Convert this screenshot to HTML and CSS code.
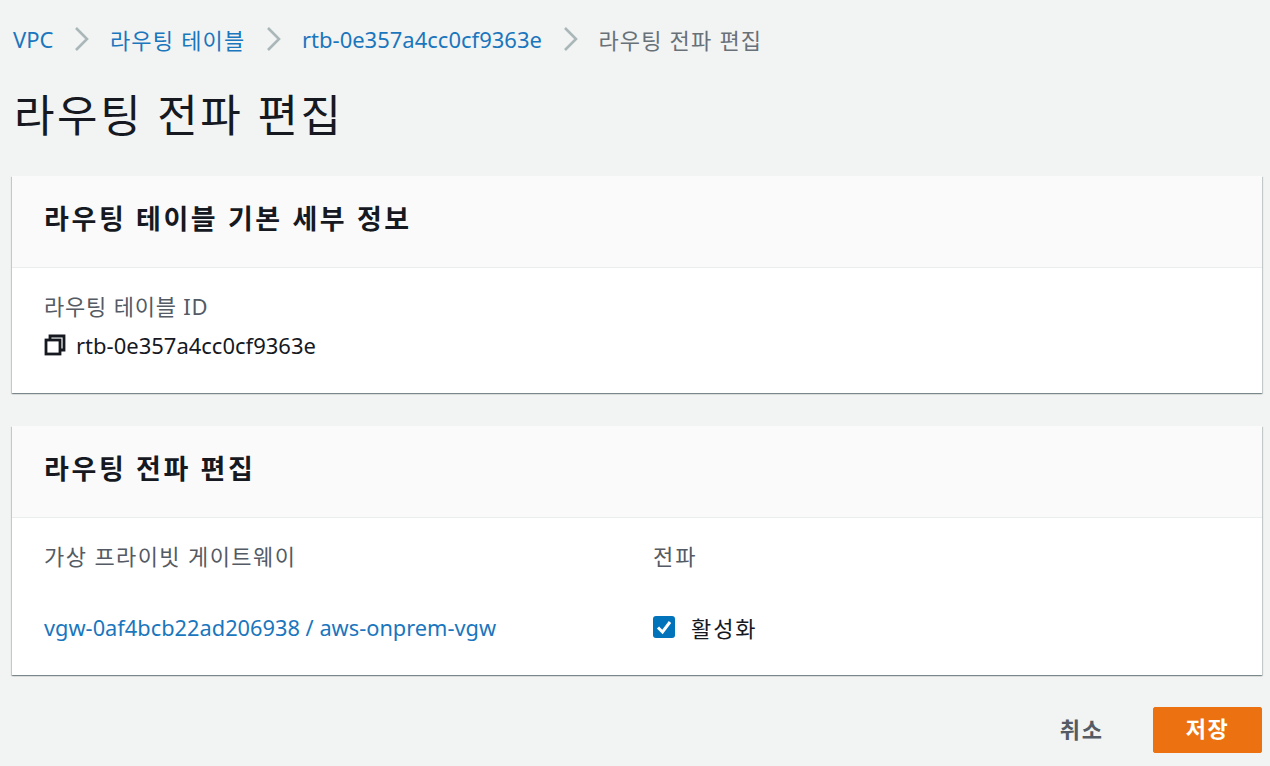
FILE: index.html
```html
<!DOCTYPE html>
<html lang="ko">
<head>
<meta charset="utf-8">
<title>라우팅 전파 편집</title>
<link rel="stylesheet" href="styles.css">
</head>
<body>
<nav class="crumbs">
  <a class="link" href="#">VPC</a>
  <svg class="sep" viewBox="0 0 16 26"><path d="M2 2l11 11L2 24"/></svg>
  <a class="link ko-crumb" href="#">라우팅 테이블</a>
  <svg class="sep" viewBox="0 0 16 26"><path d="M2 2l11 11L2 24"/></svg>
  <a class="link" href="#">rtb-0e357a4cc0cf9363e</a>
  <svg class="sep" viewBox="0 0 16 26"><path d="M2 2l11 11L2 24"/></svg>
  <span class="current ko-crumb">라우팅 전파 편집</span>
</nav>
<h1 class="page-title">라우팅 전파 편집</h1>
<section class="card card-first">
  <header class="card-head"><h2>라우팅 테이블 기본 세부 정보</h2></header>
  <div class="card-body">
    <div class="label ko-id">라우팅 테이블 ID</div>
    <div class="id-row">
      <svg class="copy" viewBox="0 0 22 22"><path d="M6 5V2h14v14h-3"/><rect x="2" y="6" width="14" height="14"/></svg>
      <span>rtb-0e357a4cc0cf9363e</span>
    </div>
  </div>
</section>
<section class="card">
  <header class="card-head"><h2>라우팅 전파 편집</h2></header>
  <div class="grid">
    <div class="label ko">가상 프라이빗 게이트웨이</div>
    <div class="label ko-wide">전파</div>
    <a class="link gw-link" href="#">vgw-0af4bcb22ad206938 / aws-onprem-vgw</a>
    <label class="check">
      <svg class="box" viewBox="0 0 22 22"><rect width="22" height="22" rx="3"/><path d="M5 11.5l4.5 4.5L17 6"/></svg>
      <span class="ko-wide">활성화</span>
    </label>
  </div>
</section>
<footer class="actions">
  <a class="cancel ko-wide" href="#">취소</a>
  <button class="save ko" type="button">저장</button>
</footer>
</body>
</html>
```
FILE: styles.css
```css
* { box-sizing: border-box; }
html, body { height: 100%; }
body {
  margin: 0;
  padding: 0 8px 0 12px;
  background: #f2f3f3;
  color: #16191f;
  font-family: "Noto Sans", "Noto Sans CJK KR", sans-serif;
  font-size: 22px;
  overflow: hidden;
}
.ko { letter-spacing: 1.4px; }
.ko-crumb { letter-spacing: 1.2px; }
.ko-id { letter-spacing: 0.8px; }
.ko-wide { letter-spacing: 1.9px; }
.link { color: #1a76bd; text-decoration: none; }
.gw-link { font-size: 21.8px; }
.crumbs {
  display: flex;
  align-items: center;
  height: 28px;
  margin: 25px 0 0 1px;
}
.sep { width: 16px; height: 26px; margin: 0 19.5px 0 21px; fill: none; stroke: #aab7b8; stroke-width: 2.6; }
.current { color: #687078; }
.page-title {
  margin: 32px 0 0 2px;
  font-size: 44px;
  line-height: 60px;
  letter-spacing: 2.6px;
  font-weight: 400;
  color: #16191f;
}
.card {
  width: 1250px;
  background: #fff;
  box-shadow: 0 1px 1px rgba(0,28,36,.3), 1px 1px 1px rgba(0,28,36,.15), -1px 1px 1px rgba(0,28,36,.15);
}
.card-first { margin-top: 31px; margin-bottom: 33px; }
.card-head {
  height: 92px;
  padding: 0 32px 8px;
  display: flex;
  align-items: center;
  background: #fafafa;
  border-bottom: 1px solid #eaeded;
}
.card-head h2 { margin: 0; font-size: 27px; letter-spacing: 2.6px; font-weight: 700; color: #16191f; }
.card-body { height: 125px; padding: 23px 32px 0; }
.label { color: #545b64; line-height: 30px; }
.id-row { display: flex; align-items: center; gap: 10px; height: 30px; margin-top: 9px; }
.copy { width: 22px; height: 22px; fill: none; stroke: #16191f; stroke-width: 2.8; }
.grid {
  display: grid;
  grid-template-columns: 609px 1fr;
  grid-template-rows: 30px 30px;
  row-gap: 41px;
  height: 157px;
  padding: 23px 32px 0;
  align-items: center;
}
.check { display: flex; align-items: center; gap: 16px; color: #16191f; }
.box { width: 22px; height: 22px; }
.box rect { fill: #0073bb; }
.box path { fill: none; stroke: #fff; stroke-width: 3; }
.actions {
  width: 1250px;
  display: flex;
  justify-content: flex-end;
  align-items: center;
  gap: 49px;
  margin-top: 32px;
}
.cancel { color: #545b64; font-weight: 700; text-decoration: none; margin-bottom: 5px; }
.save {
  width: 109px;
  height: 46px;
  padding: 0 0 6px;
  border: 1px solid #ec7211;
  border-radius: 2px;
  background: #ec7211;
  color: #fff;
  font-family: inherit;
  font-size: inherit;
  font-weight: 700;
}
```
